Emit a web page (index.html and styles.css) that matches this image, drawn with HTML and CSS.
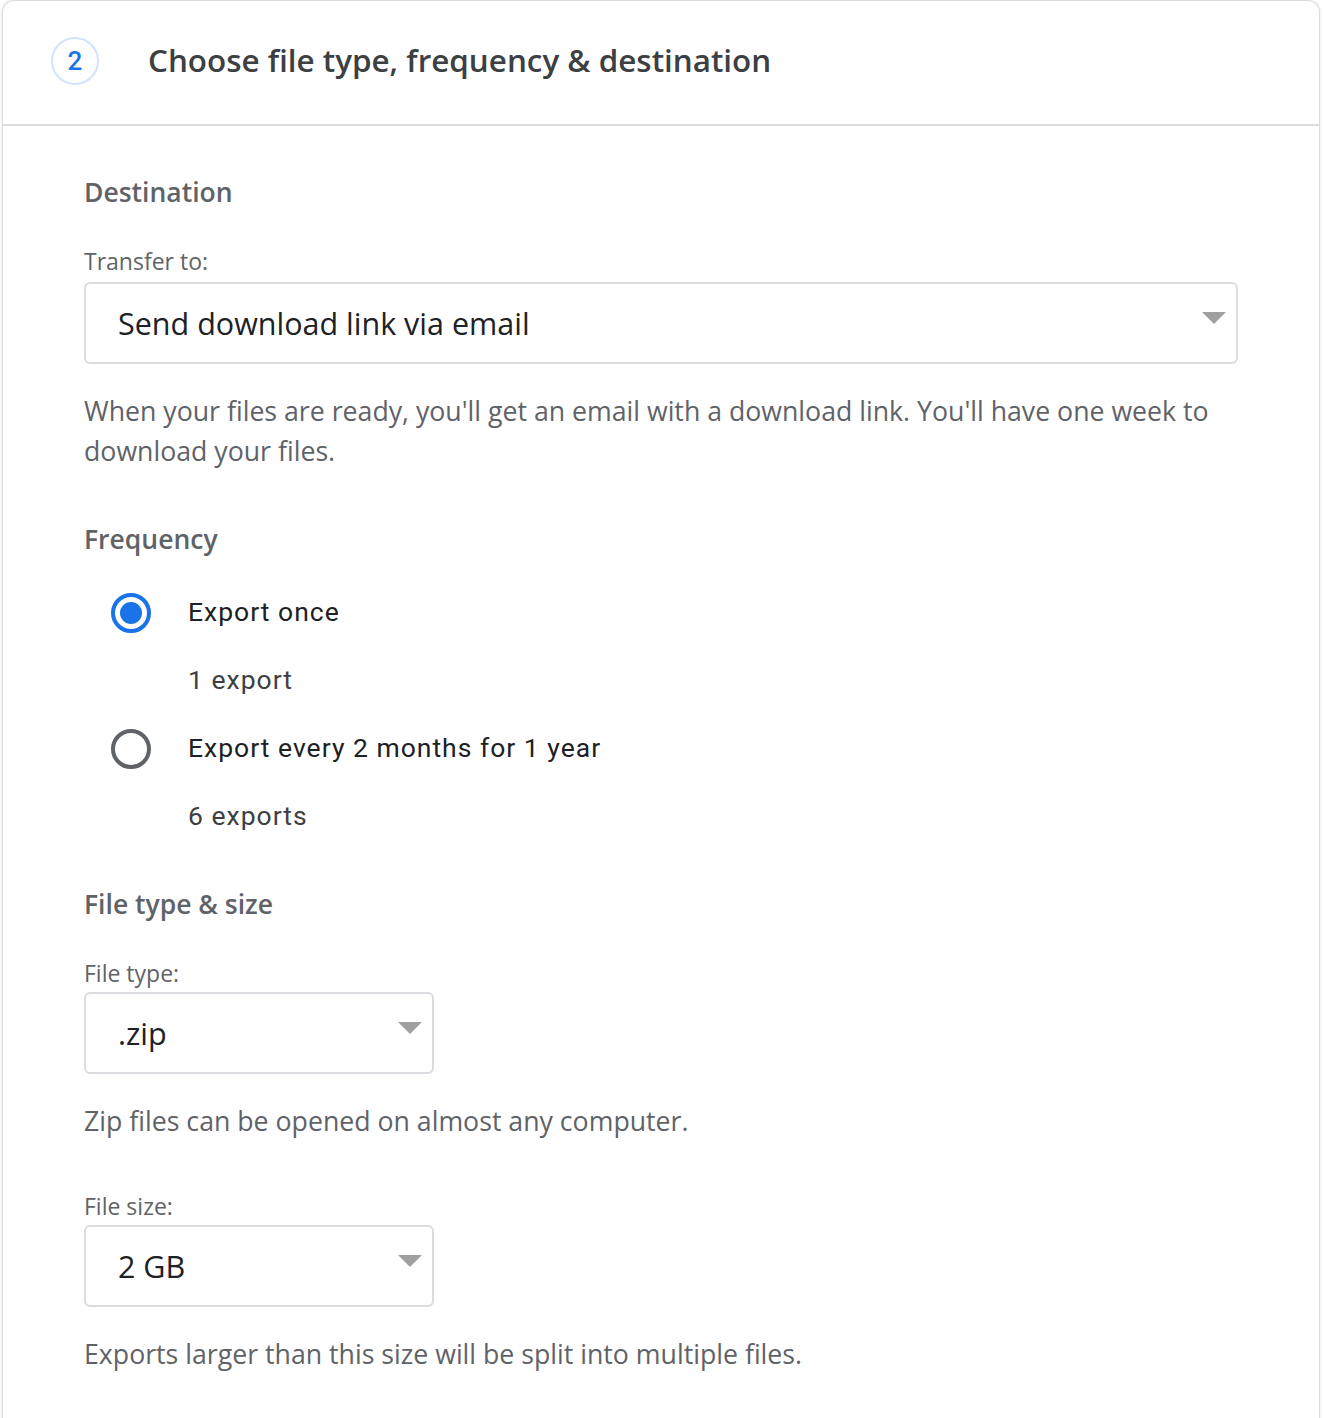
FILE: index.html
```html
<!DOCTYPE html>
<html lang="en">
<head>
    <meta charset="UTF-8">
    <meta name="viewport" content="width=device-width, initial-scale=1.0">
    <title>Choose file type, frequency &amp; destination</title>
    <link rel="stylesheet" href="styles.css">
</head>
<body>
    <div class="card">
        <div class="step-header">
            <div class="step-number">2</div>
            <h1>Choose file type, frequency &amp; destination</h1>
        </div>

        <div class="step-body">
            <section class="section">
                <h2>Destination</h2>
                <label class="field-label" for="transfer">Transfer to:</label>
                <div class="select" id="transfer">
                    <span>Send download link via email</span>
                    <span class="arrow"></span>
                </div>
                <p class="hint">When your files are ready, you'll get an email with a download link. You'll have one week to download your files.</p>
            </section>

            <section class="section">
                <h2>Frequency</h2>
                <div class="radio-list">
                    <div class="radio-item">
                        <span class="radio checked"></span>
                        <div class="radio-text">
                            <div class="radio-label">Export once</div>
                            <div class="radio-sub">1 export</div>
                        </div>
                    </div>
                    <div class="radio-item">
                        <span class="radio"></span>
                        <div class="radio-text">
                            <div class="radio-label">Export every 2 months for 1 year</div>
                            <div class="radio-sub">6 exports</div>
                        </div>
                    </div>
                </div>
            </section>

            <section class="section">
                <h2>File type &amp; size</h2>
                <label class="field-label" for="filetype">File type:</label>
                <div class="select select-small" id="filetype">
                    <span>.zip</span>
                    <span class="arrow"></span>
                </div>
                <p class="hint">Zip files can be opened on almost any computer.</p>

                <label class="field-label spaced" for="filesize">File size:</label>
                <div class="select select-small" id="filesize">
                    <span>2 GB</span>
                    <span class="arrow"></span>
                </div>
                <p class="hint">Exports larger than this size will be split into multiple files.</p>
            </section>
        </div>
    </div>
</body>
</html>
```

FILE: styles.css
```css
body {
    margin: 0;
    padding: 0;
    background: #fff;
    font-family: "Open Sans", Roboto, Arial, sans-serif;
    color: #3c4043;
}

.card {
    margin: 0 4px 0 2px;
    height: 1440px;
    border: 1px solid #dadce0;
    border-bottom: none;
    border-radius: 12px 12px 0 0;
    box-shadow: 0 0 3px rgba(60, 64, 67, 0.15);
    background: #fff;
}

.step-header {
    display: flex;
    align-items: center;
    height: 125px;
    box-sizing: border-box;
    padding: 0 0 4px 48px;
    border-bottom: 2px solid #dadce0;
}

.step-number {
    width: 48px;
    height: 48px;
    box-sizing: border-box;
    border: 2px solid #d2e3fc;
    border-radius: 50%;
    display: flex;
    align-items: center;
    justify-content: center;
    font-family: Roboto, Arial, sans-serif;
    color: #1a73e8;
    font-size: 26px;
    font-weight: 500;
}

h1 {
    margin: 0 0 2px 49px;
    font-size: 31.4px;
    font-weight: 600;
    color: #3c4043;
}

.step-body {
    padding: 46px 81px 0 81px;
}

h2 {
    margin: 0;
    font-size: 26.5px;
    font-weight: 600;
    color: #5f6368;
    line-height: 40px;
}

.section {
    margin-bottom: 48px;
}

.field-label {
    display: block;
    margin-top: 35px;
    font-size: 23px;
    line-height: 28px;
    color: #5f6368;
}

.field-label.spaced {
    margin-top: 51px;
}

.select {
    margin-top: 7px;
    height: 82px;
    border: 2px solid #dadce0;
    border-radius: 6px;
    box-sizing: border-box;
    display: flex;
    align-items: center;
    justify-content: space-between;
    padding: 0 10px 0 32px;
    font-size: 30.5px;
    color: #202124;
}

.select-small {
    margin-top: 5px;
    width: 350px;
}

.arrow {
    width: 0;
    height: 0;
    border-left: 12px solid transparent;
    border-right: 12px solid transparent;
    border-top: 12px solid #a0a0a0;
    margin-bottom: 10px;
}

.hint {
    margin: 27px 0 0;
    font-size: 26.7px;
    line-height: 40px;
    color: #5f6368;
}

.radio-list {
    margin-top: 32px;
    margin-bottom: -1px;
    padding-left: 27px;
}

.radio-item {
    display: flex;
    align-items: flex-start;
}

.radio {
    width: 40px;
    height: 40px;
    box-sizing: border-box;
    border: 4px solid #5f6368;
    border-radius: 50%;
    margin-top: 2px;
    position: relative;
    flex-shrink: 0;
}

.radio.checked {
    border-color: #1a73e8;
}

.radio.checked::after {
    content: '';
    position: absolute;
    top: 5px;
    left: 5px;
    width: 22px;
    height: 22px;
    border-radius: 50%;
    background: #1a73e8;
}

.radio-text {
    margin-left: 37px;
    font-family: Roboto, Arial, sans-serif;
    font-size: 26.5px;
    letter-spacing: 1px;
}

.radio-label {
    line-height: 42px;
    color: #202124;
}

.radio-sub {
    margin: 26px 0;
    line-height: 42px;
    color: #3c4043;
}

.radio-item:last-child .radio-sub {
    margin-bottom: 0;
}
```
